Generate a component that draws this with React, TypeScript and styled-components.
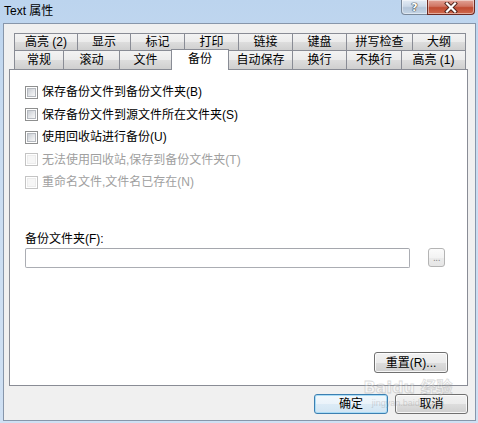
import React from "react";
import styled, { createGlobalStyle } from "styled-components";

const FONT = `"Liberation Sans", "Noto Sans CJK SC", sans-serif`;

const Global = createGlobalStyle`
  html, body { margin: 0; padding: 0; }
  body {
    width: 478px;
    height: 423px;
    overflow: hidden;
    background: #c4d9f0;
    font-family: ${FONT};
    font-size: 12px;
  }
`;

const Window = styled.div`
  position: relative;
  width: 478px;
  height: 423px;
  display: flex;
  flex-direction: column;
  background: linear-gradient(180deg, #bcd4ee 0%, #c9dcf1 30%, #cfe0f3 100%);
  box-sizing: border-box;
  overflow: hidden;
`;

const TitleBar = styled.div`
  height: 23px;
  display: flex;
  align-items: flex-start;
  padding-left: 4px;
  flex: none;
`;

const TitleText = styled.div`
  padding-top: 3px;
  line-height: 16px;
  font-size: 12px;
  color: #000;
`;

const CaptionButtons = styled.div`
  margin-left: auto;
  margin-right: 3px;
  display: flex;
  height: 15px;
`;

const CaptionButton = styled.div<{ $w: number; $close?: boolean }>`
  width: ${(p) => p.$w}px;
  height: 15px;
  box-sizing: border-box;
  display: flex;
  align-items: center;
  justify-content: center;
  border: 1px solid ${(p) => (p.$close ? "#6d2a22" : "#7a8899")};
  border-top: none;
  border-radius: ${(p) => (p.$close ? "0 0 4px 0" : "0 0 0 4px")};
  margin-left: ${(p) => (p.$close ? "-1px" : "0")};
  background: ${(p) =>
    p.$close
      ? "linear-gradient(180deg, #e2a397 0%, #d07563 45%, #c04a31 55%, #cf6a4e 100%)"
      : "linear-gradient(180deg, #e4ecf5 0%, #ccd9e8 45%, #b4c5d9 55%, #c5d5e6 100%)"};
  box-shadow: inset 0 0 0 1px rgba(255, 255, 255, 0.45);
`;

const HelpGlyph = styled.span`
  font-family: "DejaVu Sans", sans-serif;
  font-weight: bold;
  font-size: 11px;
  line-height: 11px;
  color: #fff;
  text-shadow: 0 0 1px #333, 0 0 1px #333, 0 0 1px #333;
`;

const Frame = styled.div`
  flex: 1;
  display: flex;
  padding: 0 2px 2px 3px;
  min-height: 0;
`;

const Client = styled.div`
  flex: 1;
  display: flex;
  flex-direction: column;
  background: #f0f0f0;
  border: 1px solid #8796aa;
  padding: 9px 7px 6px 5px;
  min-width: 0;
`;

const TabStrip = styled.div`
  display: flex;
  flex-direction: column;
  padding-left: 5px;
  flex: none;
`;

const TabRow = styled.div<{ $h: number }>`
  display: flex;
  height: ${(p) => p.$h}px;
  align-items: flex-start;
`;

const Tab = styled.div<{ $w: number; $h: number; $active?: boolean }>`
  box-sizing: border-box;
  width: ${(p) => p.$w + 1}px;
  height: ${(p) => (p.$active ? p.$h + 2 : p.$h)}px;
  margin-right: -1px;
  margin-top: ${(p) => (p.$active ? "-1px" : "0")};
  border: 1px solid #898c95;
  border-bottom: none;
  display: flex;
  align-items: center;
  justify-content: center;
  font-size: 12px;
  line-height: 14px;
  color: #000;
  white-space: nowrap;
  position: relative;
  z-index: ${(p) => (p.$active ? 2 : 1)};
  padding-bottom: ${(p) => (p.$active ? "3px" : "0")};
  background: ${(p) =>
    p.$active
      ? "#ffffff"
      : "linear-gradient(180deg, #f3f3f3 0%, #ebebeb 50%, #dddddd 51%, #cfcfcf 100%)"};
`;

const Panel = styled.div`
  box-sizing: border-box;
  height: 317px;
  flex: none;
  background: #fff;
  border: 1px solid #898c95;
  display: flex;
  flex-direction: column;
  padding: 11px 0 12px 15px;
`;

const CheckRow = styled.label<{ $disabled?: boolean }>`
  display: flex;
  align-items: center;
  height: 22.5px;
  color: ${(p) => (p.$disabled ? "#a0a0a0" : "#000")};
  font-size: 12px;
  line-height: 16px;
  white-space: nowrap;
`;

const CheckBox = styled.span<{ $disabled?: boolean }>`
  box-sizing: border-box;
  width: 13px;
  height: 13px;
  flex: none;
  border: 1px solid ${(p) => (p.$disabled ? "#c4c4c4" : "#8e8f8f")};
  background: #fff;
  margin-right: 4px;
  display: flex;
  align-items: center;
  justify-content: center;
  &::after {
    content: "";
    box-sizing: border-box;
    width: 9px;
    height: 9px;
    border: 1px solid ${(p) => (p.$disabled ? "#ececec" : "#b5b9bf")};
    background: ${(p) =>
      p.$disabled ? "#f6f6f6" : "linear-gradient(135deg, #c8ccd2 0%, #e4e6e9 55%, #f7f7f7 100%)"};
  }
`;

const FieldLabel = styled.div`
  margin-top: 37px;
  font-size: 12px;
  line-height: 16px;
  color: #000;
`;

const FieldRow = styled.div`
  display: flex;
  align-items: center;
  margin-top: 1px;
  gap: 18px;
`;

const TextBox = styled.div`
  box-sizing: border-box;
  width: 385px;
  height: 20px;
  border: 1px solid #abadb3;
  border-top-color: #a5a7ad;
  border-radius: 2px;
  background: #fff;
`;

const BrowseButton = styled.div`
  box-sizing: border-box;
  width: 17px;
  height: 19px;
  border: 1px solid #b4b4b4;
  border-radius: 3px;
  background: linear-gradient(180deg, #fbfbfb 0%, #f3f3f3 50%, #ebebeb 51%, #e6e6e6 100%);
  color: #8a8a8a;
  font-size: 10px;
  line-height: 12px;
  display: flex;
  align-items: flex-end;
  justify-content: center;
  padding-bottom: 2px;
  letter-spacing: -0.5px;
`;

const Button = styled.div<{ $w: number; $h: number; $default?: boolean }>`
  box-sizing: border-box;
  width: ${(p) => p.$w}px;
  height: ${(p) => p.$h}px;
  border: 1px solid ${(p) => (p.$default ? "#3c7fb1" : "#707070")};
  border-radius: 3px;
  background: ${(p) =>
    p.$default
      ? "linear-gradient(180deg, #f2f8fc 0%, #eaf3fa 50%, #dcebf6 51%, #d2e5f3 100%)"
      : "linear-gradient(180deg, #f2f2f2 0%, #ebebeb 50%, #dddddd 51%, #cfcfcf 100%)"};
  box-shadow: inset 0 0 0 1px ${(p) => (p.$default ? "#a9dcf6" : "rgba(255,255,255,0.8)")};
  display: flex;
  align-items: center;
  justify-content: center;
  font-size: 12px;
  line-height: 14px;
  color: #000;
  white-space: nowrap;
`;

const ResetButton = styled(Button)`
  margin-top: auto;
  align-self: flex-end;
  margin-right: 19px;
`;

const DialogButtons = styled.div`
  display: flex;
  justify-content: flex-end;
  gap: 7px;
  margin-top: 8px;
  flex: none;
`;

const Watermark = styled.div`
  position: absolute;
  left: 358px;
  top: 378px;
  width: 100px;
  display: flex;
  flex-direction: column;
  align-items: center;
  pointer-events: none;
  opacity: 0.3;
`;

const WatermarkBig = styled.div`
  font-family: "DejaVu Sans", "Noto Sans CJK SC", sans-serif;
  font-weight: bold;
  font-size: 16px;
  line-height: 20px;
  color: #fff;
  -webkit-text-stroke: 0.8px #8a8a8a;
  white-space: nowrap;
`;

const WatermarkSmall = styled.div`
  font-family: "Liberation Sans", sans-serif;
  font-size: 9px;
  line-height: 10px;
  color: #8a8a8a;
  white-space: nowrap;
`;

const row1 = [
  { t: "高亮 (2)", w: 63 },
  { t: "显示", w: 53 },
  { t: "标记", w: 54 },
  { t: "打印", w: 54 },
  { t: "链接", w: 54 },
  { t: "键盘", w: 54 },
  { t: "拼写检查", w: 66 },
  { t: "大纲", w: 53 },
];

const row2 = [
  { t: "常规", w: 49 },
  { t: "滚动", w: 56 },
  { t: "文件", w: 52 },
  { t: "备份", w: 57, active: true },
  { t: "自动保存", w: 64 },
  { t: "换行", w: 54 },
  { t: "不换行", w: 55 },
  { t: "高亮 (1)", w: 64 },
];

const checks = [
  { t: "保存备份文件到备份文件夹(B)", d: false },
  { t: "保存备份文件到源文件所在文件夹(S)", d: false },
  { t: "使用回收站进行备份(U)", d: false },
  { t: "无法使用回收站,保存到备份文件夹(T)", d: true },
  { t: "重命名文件,文件名已存在(N)", d: true },
];

export default function App() {
  return (
    <>
      <Global />
      <Window>
        <TitleBar>
          <TitleText>Text 属性</TitleText>
          <CaptionButtons>
            <CaptionButton $w={27}>
              <HelpGlyph>?</HelpGlyph>
            </CaptionButton>
            <CaptionButton $w={48} $close>
              <svg width="14" height="11" viewBox="0 0 14 11">
                <path d="M3 1.5 L11 9.5 M11 1.5 L3 9.5" stroke="#4a2018" strokeWidth="4" strokeLinecap="square" />
                <path d="M3 1.5 L11 9.5 M11 1.5 L3 9.5" stroke="#ffffff" strokeWidth="2.2" strokeLinecap="square" />
              </svg>
            </CaptionButton>
          </CaptionButtons>
        </TitleBar>
        <Frame>
          <Client>
            <TabStrip>
              <TabRow $h={17}>
                {row1.map((tab) => (
                  <Tab key={tab.t} $w={tab.w} $h={17}>
                    {tab.t}
                  </Tab>
                ))}
              </TabRow>
              <TabRow $h={19}>
                {row2.map((tab) => (
                  <Tab key={tab.t} $w={tab.w} $h={19} $active={tab.active}>
                    {tab.t}
                  </Tab>
                ))}
              </TabRow>
            </TabStrip>
            <Panel>
              {checks.map((c) => (
                <CheckRow key={c.t} $disabled={c.d}>
                  <CheckBox $disabled={c.d} />
                  {c.t}
                </CheckRow>
              ))}
              <FieldLabel>备份文件夹(F):</FieldLabel>
              <FieldRow>
                <TextBox />
                <BrowseButton>...</BrowseButton>
              </FieldRow>
              <ResetButton $w={74} $h={21}>
                重置(R)...
              </ResetButton>
            </Panel>
            <DialogButtons>
              <Button $w={74} $h={20} $default>
                确定
              </Button>
              <Button $w={73} $h={20}>
                取消
              </Button>
            </DialogButtons>
          </Client>
        </Frame>
        <Watermark>
          <WatermarkBig>Baidu 经验</WatermarkBig>
          <WatermarkSmall>jingyan.baidu.com</WatermarkSmall>
        </Watermark>
      </Window>
    </>
  );
}
